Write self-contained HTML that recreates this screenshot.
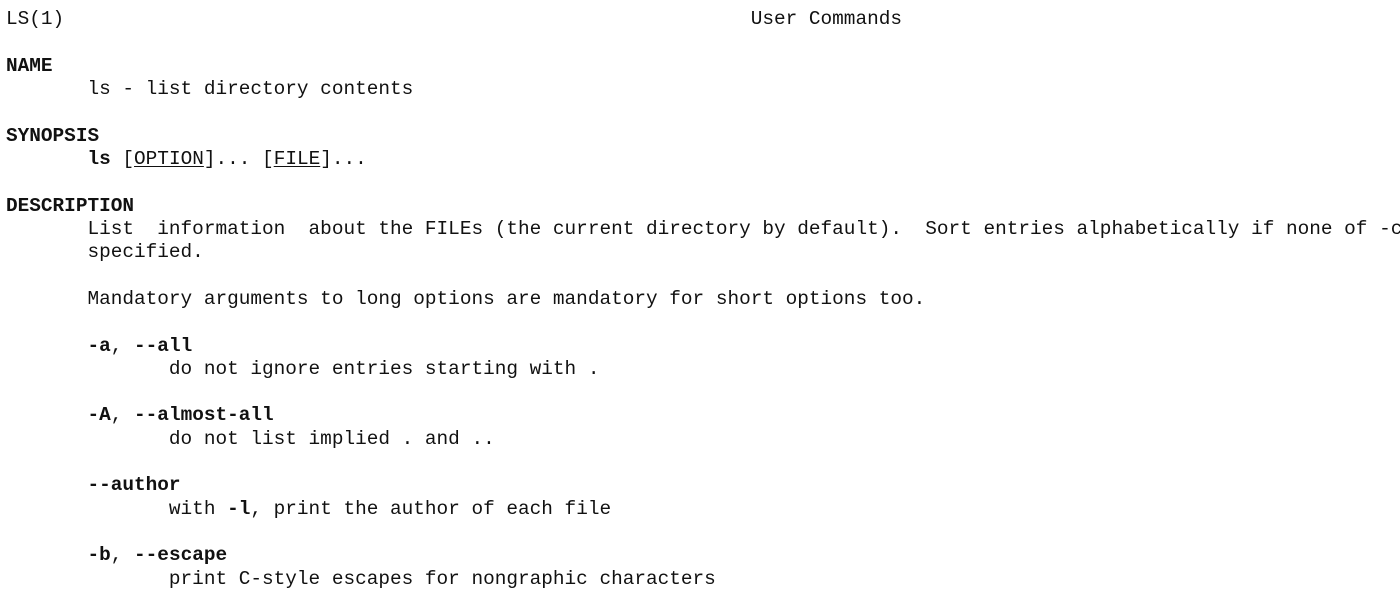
<!DOCTYPE html>
<html><head><meta charset="utf-8"><style>
html,body{margin:0;padding:0;background:#fff;width:1400px;height:593px;overflow:hidden}
pre{margin:0;position:absolute;left:6px;top:8.4px;width:1394px;overflow:hidden;font-family:"Liberation Mono",monospace;font-size:19.4px;line-height:23.3px;color:#111;white-space:pre}
b{font-weight:bold}
u{text-decoration:underline;text-underline-offset:2px}
</style></head><body>
<pre>LS(1)                                                           User Commands

<b>NAME</b>
       ls - list directory contents

<b>SYNOPSIS</b>
       <b>ls</b> [<u>OPTION</u>]... [<u>FILE</u>]...

<b>DESCRIPTION</b>
       List  information  about the FILEs (the current directory by default).  Sort entries alphabetically if none of -c
       specified.

       Mandatory arguments to long options are mandatory for short options too.

       <b>-a</b>, <b>--all</b>
              do not ignore entries starting with .

       <b>-A</b>, <b>--almost-all</b>
              do not list implied . and ..

       <b>--author</b>
              with <b>-l</b>, print the author of each file

       <b>-b</b>, <b>--escape</b>
              print C-style escapes for nongraphic characters
</pre>
</body></html>
